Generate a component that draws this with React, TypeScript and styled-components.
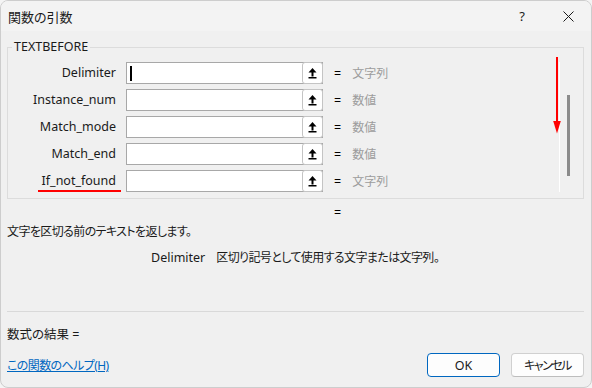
import React from 'react';
import styled, { createGlobalStyle } from 'styled-components';

const GlobalStyle = createGlobalStyle`
  html, body {
    margin: 0;
    padding: 0;
    background: #f4f4f4;
  }
  body {
    font-family: "Noto Sans", "Noto Sans CJK JP", sans-serif;
    font-size: 12.5px;
    color: #1a1a1a;
    font-feature-settings: "palt";
  }
  * {
    box-sizing: border-box;
  }
`;

const Window = styled.div`
  width: 592px;
  height: 388px;
  display: flex;
  flex-direction: column;
  background: #f0f0f0;
  border: 1px solid #cdcdcd;
  border-radius: 8px;
  overflow: hidden;
`;

const TitleBar = styled.div`
  height: 30px;
  display: flex;
  align-items: center;
  background: #f3f3f3;
  padding-left: 7px;
`;

const Title = styled.div`
  flex: 1;
  font-size: 13px;
  color: #1a1a1a;
`;

const CaptionButton = styled.div`
  width: 46px;
  height: 30px;
  display: flex;
  align-items: center;
  justify-content: center;
  font-size: 13px;
  color: #1a1a1a;
`;

const Body = styled.div`
  flex: 1;
  display: flex;
  flex-direction: column;
  padding: 8px 7px 10px 6px;
`;

const Group = styled.fieldset`
  margin: 0;
  padding: 7px 0 6px 0;
  border: 1px solid #dcdcdc;
  min-width: 0;
`;

const Legend = styled.legend`
  margin-left: 4px;
  padding: 0 2px;
  line-height: 16px;
  font-size: 12.5px;
  color: #1a1a1a;
`;

const GroupInner = styled.div`
  display: flex;
`;

const Rows = styled.div`
  flex: 1;
  display: flex;
  flex-direction: column;
  gap: 5px;
`;

const Row = styled.div`
  display: grid;
  grid-template-columns: 118px 197px auto;
  align-items: center;
  height: 22px;
`;

const Label = styled.div<{ $marked?: boolean }>`
  position: relative;
  text-align: right;
  padding-right: 10px;
  line-height: 22px;
  white-space: nowrap;

  ${({ $marked }) =>
    $marked &&
    `
    &::after {
      content: '';
      position: absolute;
      left: 30px;
      width: 83px;
      bottom: 0;
      height: 2px;
      background: #ff0000;
    }
  `}
`;

const InputBox = styled.div`
  height: 22px;
  display: flex;
  align-items: center;
  justify-content: space-between;
  border: 1px solid #a8a8a8;
  background: #ffffff;
`;

const Caret = styled.span`
  width: 2px;
  height: 15px;
  margin-left: 3px;
  background: #000;
`;

const RefButton = styled.div`
  width: 21px;
  height: 22px;
  margin: -1px -1px -1px auto;
  display: flex;
  align-items: center;
  justify-content: center;
  border: 1px solid #c4c4c4;
  border-radius: 3px;
  background: #ffffff;
`;

const Hint = styled.div`
  display: flex;
  align-items: center;
  gap: 11px;
  padding-left: 11px;
`;

const Eq = styled.span`
  color: #000;
`;

const TypeName = styled.span`
  color: #9c9c9c;
  font-size: 12px;
`;

const ScrollColumn = styled.div`
  position: relative;
  width: 31px;
  display: flex;
`;

const Track = styled.div`
  width: 1.5px;
  margin-left: 6.5px;
  background: #ffffff;
`;

const Thumb = styled.div`
  width: 2.5px;
  height: 81px;
  margin: 33px 0 0 7px;
  background: #8b8b8b;
`;

const Marker = styled.svg`
  position: absolute;
  left: 0;
  top: -5px;
`;

const EqLine = styled.div`
  margin-top: 6px;
  padding-left: 327px;
  line-height: 16px;
  color: #000;
`;

const Description = styled.div`
  margin-top: 3px;
  line-height: 16px;
  font-size: 12px;
  letter-spacing: -0.6px;
`;

const ArgHelp = styled.div`
  margin-top: 10px;
  padding-left: 144px;
  line-height: 16px;
  font-size: 12px;
  letter-spacing: -0.6px;
`;

const ArgName = styled.span`
  margin-right: 11px;
  font-size: 12.5px;
  letter-spacing: 0;
`;

const Separator = styled.div`
  margin-top: 45px;
  height: 1px;
  background: #d9d9d9;
`;

const Result = styled.div`
  margin-top: 15px;
  line-height: 16px;
`;

const Footer = styled.div`
  margin-top: auto;
  display: flex;
  align-items: center;
  justify-content: space-between;
`;

const HelpLink = styled.a`
  color: #0067c0;
  font-size: 12px;
  letter-spacing: -0.6px;
  text-decoration: underline;
  cursor: pointer;
`;

const Buttons = styled.div`
  display: flex;
  gap: 11px;
`;

const Button = styled.button<{ $primary?: boolean }>`
  width: 73px;
  height: 24px;
  font-family: inherit;
  font-size: ${({ $primary }) => ($primary ? '12.5px' : '12px')};
  letter-spacing: ${({ $primary }) => ($primary ? '0' : '-1.5px')};
  font-feature-settings: "palt";
  color: #1a1a1a;
  background: #fdfdfd;
  border: 1px solid ${({ $primary }) => ($primary ? '#0067c0' : '#d0d0d0')};
  border-bottom-color: ${({ $primary }) => ($primary ? '#0067c0' : '#bdbdbd')};
  border-radius: 4px;
  padding: 0;
`;

const RefIcon = () => (
  <svg width="9" height="11" viewBox="0 0 9 11">
    <polygon points="4.5,0 8.5,4.5 0.5,4.5" fill="#000" />
    <rect x="3.5" y="4" width="2" height="4.5" fill="#000" />
    <rect x="0.5" y="9" width="8" height="1.5" fill="#000" />
  </svg>
);

const CloseIcon = () => (
  <svg width="11" height="11" viewBox="0 0 11 11">
    <path d="M0.5 0.5 L10.5 10.5 M10.5 0.5 L0.5 10.5" stroke="#1a1a1a" strokeWidth="1" />
  </svg>
);

const args = [
  { name: 'Delimiter', type: '文字列', active: true },
  { name: 'Instance_num', type: '数値' },
  { name: 'Match_mode', type: '数値' },
  { name: 'Match_end', type: '数値' },
  { name: 'If_not_found', type: '文字列', marked: true },
];

const App = () => (
  <>
    <GlobalStyle />
    <Window>
      <TitleBar>
        <Title>関数の引数</Title>
        <CaptionButton>?</CaptionButton>
        <CaptionButton>
          <CloseIcon />
        </CaptionButton>
      </TitleBar>
      <Body>
        <Group>
          <Legend>TEXTBEFORE</Legend>
          <GroupInner>
            <Rows>
              {args.map((arg) => (
                <Row key={arg.name}>
                  <Label $marked={arg.marked}>{arg.name}</Label>
                  <InputBox>
                    {arg.active && <Caret />}
                    <RefButton>
                      <RefIcon />
                    </RefButton>
                  </InputBox>
                  <Hint>
                    <Eq>=</Eq>
                    <TypeName>{arg.type}</TypeName>
                  </Hint>
                </Row>
              ))}
            </Rows>
            <ScrollColumn>
              <Track />
              <Thumb />
              <Marker width="10" height="77" viewBox="0 0 10 77">
                <rect x="4" y="0" width="2" height="66" fill="#ff0000" />
                <polygon points="1.2,64 8.8,64 5,76.5" fill="#ff0000" />
              </Marker>
            </ScrollColumn>
          </GroupInner>
        </Group>
        <EqLine>=</EqLine>
        <Description>文字を区切る前のテキストを返します。</Description>
        <ArgHelp>
          <ArgName>Delimiter</ArgName>
          区切り記号として使用する文字または文字列。
        </ArgHelp>
        <Separator />
        <Result>数式の結果 =</Result>
        <Footer>
          <HelpLink>この関数のヘルプ(H)</HelpLink>
          <Buttons>
            <Button $primary>OK</Button>
            <Button>キャンセル</Button>
          </Buttons>
        </Footer>
      </Body>
    </Window>
  </>
);

export default App;
